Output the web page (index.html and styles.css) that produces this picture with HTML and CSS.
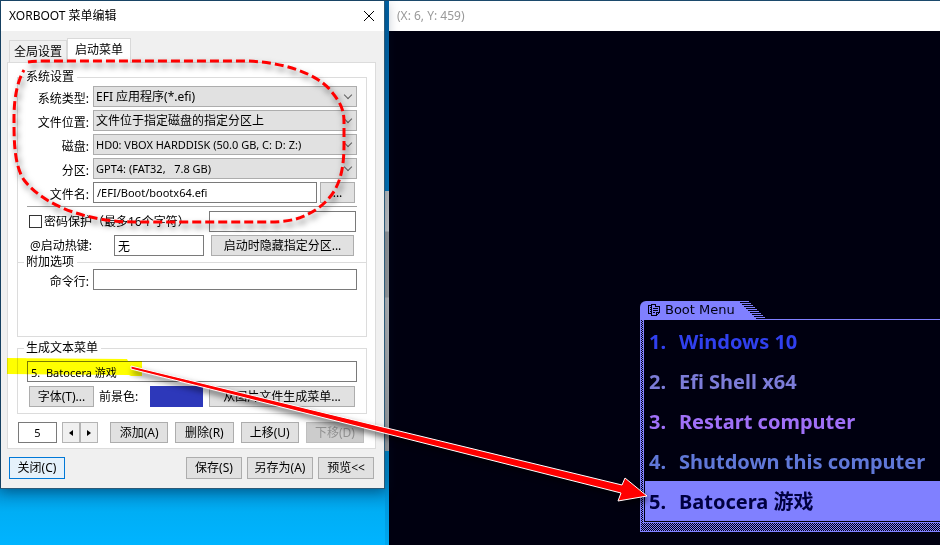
FILE: index.html
```html
<!DOCTYPE html>
<html lang="zh-CN">
<head>
<meta charset="utf-8">
<title>XORBOOT 菜单编辑</title>
<link rel="stylesheet" href="styles.css">
</head>
<body>
<main class="desktop">
  <form class="dialog" onsubmit="return false">
    <header class="titlebar">
      <h1>XORBOOT 菜单编辑</h1>
      <button type="button" class="close" aria-label="关闭窗口"><svg width="12" height="12" viewBox="0 0 12 12"><path d="M1 1l10 10M11 1L1 11"/></svg></button>
    </header>
    <nav class="tabs">
      <button type="button" class="tab">全局设置</button>
      <button type="button" class="tab active">启动菜单</button>
    </nav>
    <div class="panel">
      <fieldset class="group system">
        <legend>系统设置</legend>
        <div class="row"><label class="name" for="type">系统类型:</label><span class="select"><select id="type"><option>EFI 应用程序(*.efi)</option></select></span></div>
        <div class="row"><label class="name" for="loc">文件位置:</label><span class="select"><select id="loc"><option>文件位于指定磁盘的指定分区上</option></select></span></div>
        <div class="row"><label class="name" for="disk">磁盘:</label><span class="select"><select id="disk" class="latin"><option>HD0: VBOX HARDDISK (50.0 GB, C: D: Z:)</option></select></span></div>
        <div class="row"><label class="name" for="part">分区:</label><span class="select"><select id="part" class="latin"><option>GPT4: (FAT32, &nbsp; 7.8 GB)</option></select></span></div>
        <div class="row"><label class="name" for="file">文件名:</label><input id="file" class="grow latin" type="text" value="/EFI/Boot/bootx64.efi"><button type="button" class="btn browse">...</button></div>
        <hr>
        <div class="row protect"><input type="checkbox" id="pw"><label for="pw">密码保护（最多16个字符）</label><input type="text" class="password" aria-label="密码"></div>
        <div class="row hotkey"><label for="key">@启动热键:</label><input id="key" type="text" value="无"><button type="button" class="btn">启动时隐藏指定分区...</button></div>
      </fieldset>
      <fieldset class="group extra">
        <legend>附加选项</legend>
        <div class="row"><label class="name" for="cmd">命令行:</label><input id="cmd" class="grow" type="text"></div>
      </fieldset>
      <fieldset class="group textmenu">
        <legend>生成文本菜单</legend>
        <div class="row"><input class="grow latin" type="text" value="5.&nbsp; Batocera 游戏" aria-label="菜单文本"></div>
        <div class="row tools"><button type="button" class="btn font">字体(T)...</button><span class="caption">前景色:</span><button type="button" class="swatch" aria-label="前景色"></button><button type="button" class="btn image">从图片文件生成菜单...</button></div>
      </fieldset>
      <div class="entries">
        <input class="index latin" type="text" value="5" aria-label="菜单项">
        <div class="spin">
          <button type="button" aria-label="上一项"><svg width="4" height="6" viewBox="0 0 4 6"><path d="M4 0v6L0 3z"/></svg></button><button type="button" aria-label="下一项"><svg width="4" height="6" viewBox="0 0 4 6"><path d="M0 0v6l4-3z"/></svg></button>
        </div>
        <button type="button" class="btn">添加(A)</button>
        <button type="button" class="btn">删除(R)</button>
        <button type="button" class="btn">上移(U)</button>
        <button type="button" class="btn" disabled>下移(D)</button>
      </div>
    </div>
    <footer class="actions">
      <button type="button" class="btn primary">关闭(C)</button>
      <button type="button" class="btn">保存(S)</button>
      <button type="button" class="btn wide">另存为(A)</button>
      <button type="button" class="btn">预览&lt;&lt;</button>
    </footer>
  </form>

  <div class="behind"></div>

  <section class="preview">
    <header class="coords">(X: 6, Y: 459)</header>
    <div class="screen">
      <div class="bootmenu">
        <div class="boottab">
          <svg class="sheet" width="12" height="12" viewBox="0 0 12 12" shape-rendering="crispEdges"><path d="M3.5 1.5h-3v8h3M3.5.5h4v2h4v6l-3 3h-5zM8.5 11V8.5H11M5 4.5h5M5 6.5h5M5 8.5h2M2 3.5h1M2 5.5h1M2 7.5h1"/></svg>
          <span>Boot Menu</span>
          <svg class="slant" width="27" height="18" viewBox="0 0 27 18" shape-rendering="crispEdges"><path d="M0 .5h10M2 2.5h10M4 4.5h10M6 6.5h10M8 8.5h10M10 10.5h10M12 12.5h10M14 14.5h10M16 16.5h10"/><path class="fill" d="M0 0l17 18H0z"/></svg>
        </div>
        <div class="frame">
          <ol>
            <li class="c1"><span>1.</span>Windows 10</li>
            <li class="c2"><span>2.</span>Efi Shell x64</li>
            <li class="c3"><span>3.</span>Restart computer</li>
            <li class="c4"><span>4.</span>Shutdown this computer</li>
            <li class="selected"><span>5.</span>Batocera 游戏</li>
          </ol>
        </div>
      </div>
    </div>
  </section>

  <svg class="marks highlight" width="940" height="545" viewBox="0 0 940 545"><path d="M7 358l120 1 1 2h14v15H131l-2-1-122-1z"/></svg>
  <svg class="marks" width="940" height="545" viewBox="0 0 940 545">
    <path class="lasso" d="M28 62Q34 61 44 61H243C280 61 317 73 331 91C341 103 344 110 344 122V145C344 180 335 196 317 209C300 220 288 222 266 222H135C90 222 45 207 24 180C14 165 14 140 14 118C14 96 18 80 24 70"/>
    <path class="arrow" d="M131 366L622 485L625 478L647 496L618 501L621 493L131 369z"/>
  </svg>
</main>
</body>
</html>
```
FILE: styles.css
```css
* { box-sizing: border-box; }

body {
  margin: 0;
  font: 12px/14px "Noto Sans", "Noto Sans CJK SC", sans-serif;
  color: #000;
}

button, input, select { font: inherit; color: inherit; margin: 0; }

.desktop {
  position: relative;
  display: grid;
  grid-template-columns: minmax(0, 384px) 4px minmax(0, 1fr);
  align-items: start;
  min-height: 100vh;
  padding: 1px 0 0 1px;
  overflow: hidden;
  background: linear-gradient(#1c4a6c 0 488px, #0093d6 489px, #00aef5 512px, #00b4ff 545px);
}

.dialog {
  position: relative;
  background: #f0f0f0;
  border-right: 1px solid #2c5a78;
  border-bottom: 1px solid #2c5a78;
  box-shadow: 0 3px 12px rgba(0, 30, 60, .45);
}

.titlebar {
  display: flex;
  justify-content: space-between;
  align-items: center;
  height: 30px;
  padding: 0 9px 0 8px;
  background: #fff;
}
.titlebar h1 { margin: 0; font-size: 12px; font-weight: 400; }
.close { display: flex; padding: 0; border: 0; background: none; }
.close path { stroke: #000; fill: none; }

.tabs {
  display: flex;
  align-items: flex-end;
  padding: 7px 8px 0;
}
.tab {
  height: 22px;
  padding: 0 4px;
  border: 1px solid #d9d9d9;
  border-bottom: 0;
  background: #f0f0f0;
}
.tab.active {
  position: relative;
  height: 25px;
  margin: 0 0 -1px;
  padding: 0 7px 3px;
  background: #fff;
}

.panel {
  margin: 0 8px 0 6px;
  padding: 7px 8px 5px 9px;
  border: 1px solid #dcdcdc;
  background: #fff;
}

.group {
  display: flex;
  flex-direction: column;
  gap: 3px;
  margin: 0;
  padding: 2px 9px 6px;
  min-width: 0;
  border: 1px solid #dcdcdc;
}
.group legend { padding: 0 3px 0 2px; margin-left: -3px; }
.system { border-bottom: 0; }
.extra { margin-top: -7px; padding: 0 9px 46px; }
.textmenu { gap: 4px; margin-top: 4px; padding-top: 6px; }

.row { display: flex; align-items: center; min-height: 21px; }
.name { flex: none; width: 62px; margin-right: 4px; padding-top: 4px; text-align: right; }
.grow { flex: 1; min-width: 0; }

input[type="text"] {
  height: 21px;
  min-width: 0;
  padding: 0 3px;
  border: 1px solid #7a7a7a;
  background: #fff;
}

.select { position: relative; flex: 1; min-width: 0; }
.select select {
  display: block;
  width: 100%;
  height: 21px;
  padding: 0 20px 0 2px;
  border: 1px solid #adadad;
  border-radius: 0;
  background: #e1e1e1;
  appearance: none;
}
.row .latin, .entries .latin { font-size: 11px; }
.select::after {
  content: "";
  position: absolute;
  right: 6px;
  top: 6px;
  width: 5px;
  height: 5px;
  border: solid #606060;
  border-width: 0 1px 1px 0;
  transform: rotate(45deg);
}

.btn {
  height: 21px;
  padding: 0 4px;
  border: 1px solid #adadad;
  background: #e1e1e1;
  white-space: nowrap;
}
.btn:disabled { border-color: #bfbfbf; background: #ccc; color: #929292; }
.browse { width: 35px; margin: 0 2px 0 3px; }

hr { width: 100%; margin: 0 0 1px; border: 0; border-top: 1px solid #a0a0a0; }

.protect input[type="checkbox"] {
  flex: none;
  width: 13px;
  height: 13px;
  margin: 0 2px;
  appearance: none;
  border: 1px solid #333;
  background: #fff;
}
.protect label { flex: 1; white-space: nowrap; }
.protect .password { width: 147px; margin-right: 1px; }
.hotkey label { width: 84px; padding-left: 3px; margin-right: 3px; }
.hotkey input[type="text"] { flex: 1; }
.hotkey .btn { width: 143px; margin: 0 3px 0 7px; }

.tools { padding: 0 2px; }
.tools .font { width: 65px; }
.caption { flex: 1; padding-left: 5px; }
.swatch { width: 53px; height: 21px; border: 0; background: #2d38ba; }
.tools .image { width: 146px; margin-left: 6px; }

.entries { display: flex; align-items: center; gap: 7px; margin: 8px 3px 0 1px; }
.entries .btn { flex: 1; }
.entries .index { width: 39px; text-align: center; }
.spin { display: flex; margin: 0 5px 0 -2px; }
.spin button {
  display: flex;
  align-items: center;
  justify-content: center;
  width: 18px;
  height: 21px;
  padding: 0;
  border: 1px solid #b4b4b4;
  background: #f0f0f0;
}

.actions { display: flex; gap: 5px; padding: 8px 10px 9px 8px; }
.actions .btn { width: 56px; height: 22px; }
.actions .wide { width: 66px; }
.actions .primary { margin-right: auto; border-color: #0078d7; background: #e5f1fb; }

.behind {
  align-self: stretch;
  background: linear-gradient(#0064a8 0, #0079c0 190px, #c8c8c8 190px, #d2d2d2 230px, #a0a0a0 231px, #a6a6a6 296px, #c4c4c4 297px, #a4a4a4 450px, #0087c8 450px, #00a7ef 545px);
}

.preview {
  align-self: stretch;
  min-width: 0;
  background: #000010;
}
.coords {
  display: flex;
  align-items: center;
  height: 30px;
  padding-left: 8px;
  background: #fff;
  color: #999;
}
.screen { padding: 270px 0 13px 251px; }

.boottab {
  display: flex;
  align-items: center;
  width: max-content;
  height: 18px;
  padding-left: 8px;
  border-top-left-radius: 6px;
  background: #8080ff;
  font: 13px/18px "DejaVu Sans", sans-serif;
  color: #000010;
}
.sheet { margin-right: 5px; }
.sheet path { fill: none; stroke: #000010; }
.slant { margin-left: 4px; background: #000010; }
.slant path { stroke: #8080ff; }
.slant .fill { stroke: none; fill: #8080ff; }

.frame {
  padding: 0 0 8px 2px;
  border: solid #8080ff;
  border-width: 1px 0 1px 1px;
  background: repeating-conic-gradient(#8080ff 0 25%, #000010 0 50%) 0 0 / 2px 2px;
}
.frame ol {
  margin: 0;
  padding: 1px 0 1px 1px;
  border: solid #8080ff;
  border-width: 0 0 1px 1px;
  background: #000010;
  list-style: none;
}
.frame li {
  display: flex;
  height: 40px;
  padding-left: 4px;
  font-size: 20px;
  font-weight: 700;
  line-height: 42px;
  white-space: nowrap;
}
.frame li span { width: 30px; }
.c1 { color: #3040ee; }
.c2 { color: #7c7cd8; }
.c3 { color: #a070f8; }
.c4 { color: #6078d8; }
.selected { background: #8080ff; color: #000040; }

.marks { position: absolute; left: 0; top: 0; pointer-events: none; }
.highlight { mix-blend-mode: multiply; fill: #ff0; }
.lasso {
  fill: none;
  stroke: #f00;
  stroke-width: 3;
  stroke-dasharray: 9 4;
  filter: drop-shadow(2px 4px 3px rgba(0, 0, 0, .55));
}
.arrow {
  fill: #f00;
  stroke: #fff;
  stroke-width: 1;
  filter: drop-shadow(2px 4px 3px rgba(0, 0, 0, .6));
}
```
